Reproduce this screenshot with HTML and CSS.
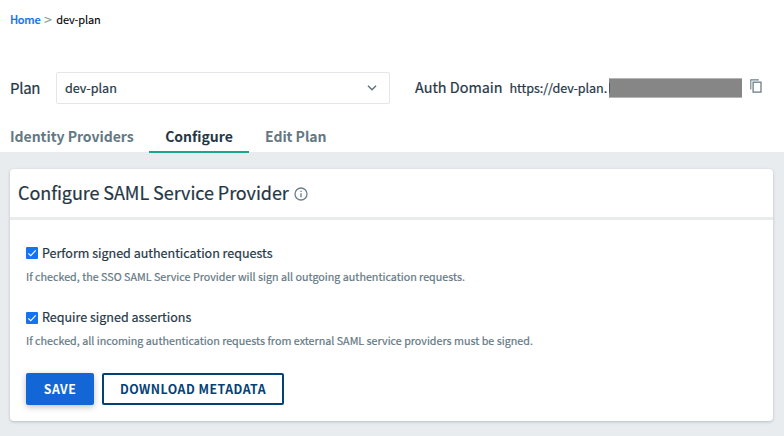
FILE: index.html
```html
<!DOCTYPE html>
<html lang="en">
<head>
<meta charset="utf-8">
<title>Configure SAML Service Provider</title>
<link rel="stylesheet" href="styles.css">
</head>
<body>
<header class="top">
  <nav class="crumbs"><a class="crumb-link" href="#">Home</a><span class="crumb-sep">&gt;</span><span class="crumb-current">dev-plan</span></nav>
  <div class="plan-row">
    <span class="plan-label">Plan</span>
    <div class="select"><span>dev-plan</span>
      <svg class="chevron" width="12" height="8" viewBox="0 0 12 8"><path d="M2 1.7 6 5.7 10 1.7" fill="none" stroke="currentColor" stroke-width="1.5"/></svg>
    </div>
    <span class="domain-label">Auth Domain</span>
    <span class="domain-url">https://dev-plan.</span>
    <span class="redacted"></span>
    <svg class="copy" width="13" height="15" viewBox="0 0 13 15" fill="none" stroke="currentColor"><path d="M.8 10.5V.9H8.8" stroke-width="1.1"/><rect x="3.1" y="3.2" width="7.9" height="9.9" stroke-width="1.3"/></svg>
  </div>
  <nav class="tabs">
    <a class="tab tab-providers">Identity Providers</a>
    <a class="tab tab-active">Configure</a>
    <a class="tab tab-edit">Edit Plan</a>
  </nav>
</header>
<main class="content">
  <section class="card">
    <h1 class="card-head"><span class="card-title">Configure SAML Service Provider</span>
      <svg class="info" width="14" height="14" viewBox="0 0 14 14" fill="none" stroke="currentColor" stroke-width="1.3"><circle cx="7" cy="7" r="6"/><path d="M7 6.2V10.2M7 3.7V5"/></svg>
    </h1>
    <div class="card-body">
      <div class="option">
        <label class="check-row"><svg class="check" width="12" height="12" viewBox="0 0 12 12"><rect width="12" height="12" rx="1" fill="#1473f0"/><path d="M2.3 6.3 4.7 8.7 9.8 3.4" fill="none" stroke="#fff" stroke-width="1.1"/></svg><span>Perform signed authentication requests</span></label>
        <p class="hint">If checked, the SSO SAML Service Provider will sign all outgoing authentication requests.</p>
      </div>
      <div class="option">
        <label class="check-row"><svg class="check check-low" width="12" height="12" viewBox="0 0 12 12"><rect width="12" height="12" rx="1" fill="#1473f0"/><path d="M2.3 6.3 4.7 8.7 9.8 3.4" fill="none" stroke="#fff" stroke-width="1.1"/></svg><span>Require signed assertions</span></label>
        <p class="hint">If checked, all incoming authentication requests from external SAML service providers must be signed.</p>
      </div>
      <div class="actions">
        <button class="btn btn-primary">SAVE</button>
        <button class="btn btn-outline">DOWNLOAD METADATA</button>
      </div>
    </div>
  </section>
</main>
</body>
</html>
```
FILE: styles.css
```css
* { box-sizing: border-box; }
body {
  margin: 0;
  height: 436px;
  overflow: hidden;
  background: #e8ecef;
  color: #253746;
  font-family: "Noto Sans CJK SC", "Noto Sans", sans-serif;
  font-weight: 400;
  -webkit-text-stroke: .2px currentColor;
  display: flex;
  flex-direction: column;
}
span, a, p { white-space: nowrap; }
.top { height: 152px; background: #fff; padding: 11px 0 0 10px; flex: none; }
.crumbs { display: flex; height: 16px; font-size: 11px; line-height: 16px; color: #000; font-weight: 400; -webkit-text-stroke: .1px currentColor; }
.crumb-link { width: 34px; color: #0f73ee; text-decoration: none; font-weight: 500; letter-spacing: -.3px; -webkit-text-stroke: .2px currentColor; }
.crumb-sep { width: 12.2px; color: #8b979e; font-size: 14px; }
.crumb-current { letter-spacing: -.1px; }
.plan-row { display: flex; align-items: center; height: 32px; margin-top: 45px; }
.plan-label { width: 46px; font-size: 15px; line-height: 20px; letter-spacing: -.3px; }
.select { width: 334px; height: 32px; border: 1px solid #e4e7e9; border-radius: 2px; padding: 0 11px 0 8px; display: flex; align-items: center; justify-content: space-between; font-size: 12.6px; line-height: 20px; }
.chevron { color: #5f7480; }
.domain-label { margin: -2px 0 0 25px; width: 94.5px; font-size: 14.4px; line-height: 20px; }
.domain-url { width: 99.5px; font-size: 12.6px; line-height: 20px; letter-spacing: -.07px; }
.redacted { position: relative; width: 133px; height: 20px; margin-top: -1px; background: #868686; border: 1px solid #b4b4b4; border-width: 1px 0; }
.redacted::before { content: ""; position: absolute; left: 0; top: 4px; width: 1px; height: 10px; background: #4a5862; }
.copy { color: #6b7e89; margin-left: 8px; margin-top: -4px; }
.tabs { display: flex; height: 33px; margin-top: 16px; font-size: 14px; line-height: 33px; font-weight: 700; color: #647883; -webkit-text-stroke: 0; }
.tab { height: 33px; }
.tab-providers { width: 139px; letter-spacing: -.04px; }
.tab-active { width: 100px; text-align: center; color: #253746; border-bottom: 2px solid #1aa68f; }
.tab-edit { margin-left: 16px; letter-spacing: -.04px; }
.content { padding: 17px 11px 0 10px; }
.card { height: 252px; background: #fff; border-radius: 4px; box-shadow: 0 1px 3px rgba(37, 55, 70, .25); }
.card-head { margin: 0; height: 51px; padding-left: 8px; display: flex; align-items: center; border-bottom: 3px solid #e8ecef; font-weight: 400; font-size: 18px; line-height: 24px; }
.card-title { width: 276px; letter-spacing: -.07px; margin-top: -2px; }
.info { color: #6b7e89; margin-top: 1px; }
.card-body { padding: 23px 16px 0; }
.option { height: 64px; }
.check-row { display: flex; align-items: center; height: 20px; font-size: 12.53px; line-height: 20px; }
.check { margin: 0 4px 0 0; }
.check-low { margin-top: 2px; }
.hint { margin: 6px 0 0; font-size: 10.74px; line-height: 16px; color: #647883; }
.actions { display: flex; gap: 8px; margin-top: 2px; }
.btn { height: 32px; padding: 0; border-radius: 2px; font: 700 12.3px/20px "Noto Sans CJK SC", "Noto Sans", sans-serif; letter-spacing: .5px; -webkit-text-stroke: 0; }
.btn-primary { width: 68px; border: 0; background: #1266d6; color: #fff; box-shadow: 0 2px 6px rgba(0, 0, 0, .25); }
.btn-outline { width: 182px; border: 2px solid #044176; background: #fff; color: #044176; }
```
